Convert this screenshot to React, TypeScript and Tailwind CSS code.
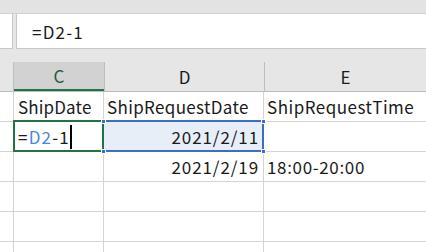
const font = { fontFamily: '"Noto Sans CJK JP", "Noto Sans", sans-serif' };

function Row({ children }: { children?: React.ReactNode }) {
  return <div className="flex h-[30px] border-b border-[#d4d4d4] bg-white">{children}</div>;
}

export default function App() {
  return (
    <div
      className="w-[426px] h-[252px] overflow-hidden bg-[#e6e6e6] text-[17px] text-[#1a1a1a] leading-none"
      style={font}
    >
      {/* ribbon edge */}
      <div className="h-[14px] border-b border-[#d0d0d0] bg-[#e3e3e3]" />

      {/* name box + formula bar */}
      <div className="flex h-[35px]">
        <div className="w-[13px] bg-white border-r border-b border-[#c8c8c8]" />
        <div className="w-[3px]" />
        <div className="flex-1 flex items-center bg-white border-l border-b border-[#c8c8c8] pl-[15px] tracking-[1.2px]">
          =D2-1
        </div>
      </div>

      <div className="h-[13px]" />

      {/* column headers */}
      <div className="flex h-[30px] border-b border-[#bdbdbd]">
        <div className="w-[14px] border-r border-[#bdbdbd]" />
        <div className="w-[90px] flex items-center justify-center bg-[#d2d2d2] border-b-2 border-[#217346] text-[#1d5b3c]">
          C
        </div>
        <div className="w-[161px] flex items-center justify-center border-l border-r border-[#bdbdbd]">D</div>
        <div className="flex-1 flex items-center justify-center">E</div>
      </div>

      {/* row 1 */}
      <Row>
        <div className="w-[14px] border-r border-[#d4d4d4]" />
        <div className="w-[90px] flex items-center pl-[4px] border-r border-[#d4d4d4] tracking-[0.15px]">ShipDate</div>
        <div className="w-[160px] flex items-center pl-[3px] border-r border-[#d4d4d4] tracking-[0.35px]">ShipRequestDate</div>
        <div className="flex-1 flex items-center pl-[3px] tracking-[0.5px]">ShipRequestTime</div>
      </Row>

      {/* row 2 – editing */}
      <Row>
        <div className="w-[14px] border-r border-[#d4d4d4]" />
        <div className="relative w-[90px] flex items-center pl-[4px] border-r border-[#d4d4d4] tracking-[1.2px]">
          <div className="absolute -left-[1px] -top-[2px] -bottom-[1px] -right-[1px] border-2 border-[#217346]" />
          <span>=</span>
          <span className="text-[#4a86e8]">D2</span>
          <span>-1</span>
          <span className="w-[2px] h-[24px] bg-black" />
        </div>
        <div className="relative w-[160px] flex items-center justify-end pr-[4px] bg-[#e8eef8] border-r border-[#d4d4d4] tracking-[0.9px]">
          <div className="absolute left-0 -top-[2px] -bottom-[1px] -right-[1px] border-2 border-l-0 border-[#3b6fc6]" />
          <div className="absolute -left-[3px] -top-[3px] w-[5px] h-[5px] bg-[#3b6fc6] border border-white" />
          <div className="absolute -left-[3px] -bottom-[3px] w-[5px] h-[5px] bg-[#3b6fc6] border border-white" />
          <div className="absolute -right-[3px] -top-[3px] w-[5px] h-[5px] bg-[#3b6fc6] border border-white" />
          <div className="absolute -right-[3px] -bottom-[3px] w-[5px] h-[5px] bg-[#3b6fc6] border border-white" />
          <span className="relative">2021/2/11</span>
        </div>
        <div className="flex-1" />
      </Row>

      {/* row 3 */}
      <Row>
        <div className="w-[14px] border-r border-[#d4d4d4]" />
        <div className="w-[90px] border-r border-[#d4d4d4]" />
        <div className="w-[160px] flex items-center justify-end pr-[4px] border-r border-[#d4d4d4] tracking-[0.9px]">
          2021/2/19
        </div>
        <div className="flex-1 flex items-center pl-[3px] tracking-[0.65px]">18:00-20:00</div>
      </Row>

      {[0, 1, 2].map((i) => (
        <Row key={i}>
          <div className="w-[14px] border-r border-[#d4d4d4]" />
          <div className="w-[90px] border-r border-[#d4d4d4]" />
          <div className="w-[160px] border-r border-[#d4d4d4]" />
          <div className="flex-1" />
        </Row>
      ))}
    </div>
  );
}
